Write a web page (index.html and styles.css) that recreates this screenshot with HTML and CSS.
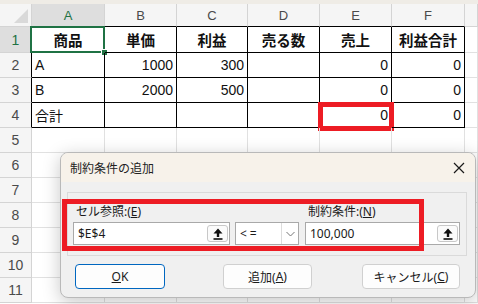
FILE: index.html
```html
<!DOCTYPE html>
<html lang="ja">
<head>
<meta charset="utf-8">
<title>制約条件の追加</title>
<link rel="stylesheet" href="styles.css">
</head>
<body>
<div class="band"></div>
<div class="sheet">
  <div class="c h corner"><span class="tri"></span></div>
  <div class="c h col tb selh">A</div>
  <div class="c h col tb">B</div>
  <div class="c h col tb">C</div>
  <div class="c h col tb">D</div>
  <div class="c h col tb">E</div>
  <div class="c h col tb">F</div>
  <div class="c h col"></div>

  <div class="c h rh tr selh">1</div>
  <div class="c t ctr b sel">商品<span class="selbox"><span class="handle"></span></span></div>
  <div class="c t ctr b">単価</div>
  <div class="c t ctr b">利益</div>
  <div class="c t ctr b">売る数</div>
  <div class="c t ctr b">売上</div>
  <div class="c t ctr b">利益合計</div>
  <div class="c"></div>

  <div class="c h rh tr">2</div>
  <div class="c t">A</div>
  <div class="c t num">1000</div>
  <div class="c t num">300</div>
  <div class="c t"></div>
  <div class="c t num">0</div>
  <div class="c t num">0</div>
  <div class="c"></div>

  <div class="c h rh tr">3</div>
  <div class="c t">B</div>
  <div class="c t num">2000</div>
  <div class="c t num">500</div>
  <div class="c t"></div>
  <div class="c t num">0</div>
  <div class="c t num">0</div>
  <div class="c"></div>

  <div class="c h rh tr">4</div>
  <div class="c t">合計</div>
  <div class="c t"></div>
  <div class="c t"></div>
  <div class="c t"></div>
  <div class="c t num mark">0<span class="markbox"></span></div>
  <div class="c t num">0</div>
  <div class="c"></div>

  <div class="c h rh">5</div><div class="c"></div><div class="c"></div><div class="c"></div><div class="c"></div><div class="c"></div><div class="c"></div><div class="c"></div>
  <div class="c h rh">6</div><div class="c"></div><div class="c"></div><div class="c"></div><div class="c"></div><div class="c"></div><div class="c"></div><div class="c"></div>
  <div class="c h rh">7</div><div class="c"></div><div class="c"></div><div class="c"></div><div class="c"></div><div class="c"></div><div class="c"></div><div class="c"></div>
  <div class="c h rh">8</div><div class="c"></div><div class="c"></div><div class="c"></div><div class="c"></div><div class="c"></div><div class="c"></div><div class="c"></div>
  <div class="c h rh">9</div><div class="c"></div><div class="c"></div><div class="c"></div><div class="c"></div><div class="c"></div><div class="c"></div><div class="c"></div>
  <div class="c h rh">10</div><div class="c"></div><div class="c"></div><div class="c"></div><div class="c"></div><div class="c"></div><div class="c"></div><div class="c"></div>
  <div class="c h rh">11</div><div class="c"></div><div class="c"></div><div class="c"></div><div class="c"></div><div class="c"></div><div class="c"></div><div class="c"></div>
</div>

<div class="dlg">
  <div class="dlg-title">
    <span class="title-text">制約条件の追加</span>
    <svg class="close" width="12" height="12" viewBox="0 0 12 12"><path d="M1 1 L11 11 M11 1 L1 11" stroke="#1a1a1a" stroke-width="1.2" fill="none"/></svg>
  </div>
  <div class="dlg-body">
    <div class="group">
      <div class="field f1">
        <div class="lbl">セル参照:(<u>E</u>)</div>
        <div class="input">
          <span class="val">$E$4</span>
          <span class="ref"><svg width="10" height="12" viewBox="0 0 10 12"><path d="M5 0.5 L9.5 5.5 L6.2 5.5 L6.2 9 L3.8 9 L3.8 5.5 L0.5 5.5 Z" fill="#111"/><rect x="0.5" y="10.2" width="9" height="1.6" fill="#111"/></svg></span>
        </div>
      </div>
      <div class="field f2">
        <div class="combo">
          <span class="val op">&lt;=</span>
          <span class="drop"><svg width="9" height="6" viewBox="0 0 9 6"><path d="M0.5 1 L4.5 5 L8.5 1" stroke="#777" stroke-width="1" fill="none"/></svg></span>
        </div>
      </div>
      <div class="field f3">
        <div class="lbl">制約条件:(<u>N</u>)</div>
        <div class="input">
          <span class="val">100,000</span>
          <span class="ref"><svg width="10" height="12" viewBox="0 0 10 12"><path d="M5 0.5 L9.5 5.5 L6.2 5.5 L6.2 9 L3.8 9 L3.8 5.5 L0.5 5.5 Z" fill="#111"/><rect x="0.5" y="10.2" width="9" height="1.6" fill="#111"/></svg></span>
        </div>
      </div>
    </div>
    <div class="buttons">
      <div class="btn ok"><u>O</u>K</div>
      <div class="btn add">追加(<u>A</u>)</div>
      <div class="btn cancel">キャンセル(<u>C</u>)</div>
    </div>
  </div>
  <div class="redbox"></div>
</div>
</body>
</html>
```
FILE: styles.css
```css
* { box-sizing: border-box; }
html, body { margin: 0; padding: 0; }
body {
  position: relative;
  width: 478px;
  height: 304px;
  overflow: hidden;
  background: #ffffff;
  font-family: "Liberation Sans", "Noto Sans CJK JP", sans-serif;
}
.band { height: 4px; background: #efece6; }
.sheet {
  display: grid;
  grid-template-columns: 32px 73px 72px 71px 72px 72px 73px 1fr;
  grid-template-rows: 23px 26px repeat(10, 25px);
}
.c {
  position: relative;
  display: flex;
  align-items: center;
  padding: 0 3px;
  border-right: 1px solid #e1e1e1;
  border-bottom: 1px solid #e1e1e1;
  font-size: 14px;
  color: #111;
  white-space: nowrap;
}
.h {
  background: #f5f5f5;
  border-color: #d4d4d4;
  color: #4a4a4a;
  justify-content: center;
}
.col { font-size: 13px; }
.rh { font-size: 14px; padding: 0; }
.selh { background: #dedede; color: #1f7244; }
.corner { position: relative; }
.tri {
  position: absolute;
  right: 3px;
  bottom: 3px;
  width: 14px;
  height: 14px;
  background: #d9d9d9;
  clip-path: polygon(100% 0, 100% 100%, 0 100%);
}
.tb { border-bottom-color: #000; }
.tr { border-right-color: #000; }
.t { border-right-color: #000; border-bottom-color: #000; }
.ctr { justify-content: center; }
.b { font-weight: 700; font-size: 14.5px; }
.num { justify-content: flex-end; }
.selbox {
  position: absolute;
  left: -2px;
  top: -1px;
  right: -1px;
  bottom: -1px;
  border: 2px solid #1f7244;
}
.handle {
  position: absolute;
  right: -5px;
  bottom: -5px;
  width: 7px;
  height: 7px;
  background: #1f7244;
  border: 1px solid #fff;
}
.markbox {
  position: absolute;
  left: -2px;
  top: -1px;
  right: -3px;
  bottom: -4px;
  border: 5px solid #ed1c24;
}

/* dialog */
.dlg {
  position: absolute;
  left: 60px;
  top: 152px;
  width: 416px;
  height: 146px;
  border: 1px solid #b9b9b9;
  border-radius: 8px;
  background: #f0f0f0;
  box-shadow: 0 4px 18px rgba(0,0,0,0.22);
  overflow: hidden;
  font-family: "Noto Sans", "Noto Sans CJK JP", sans-serif;
  color: #1a1a1a;
}
.dlg-title {
  height: 29px;
  background: #f7f2ea;
  display: flex;
  align-items: center;
  justify-content: space-between;
  padding: 0 10px 0 9px;
  font-size: 12px;
}
.title-text { color: #222; }
.close { display: block; margin-right: 0; }
.dlg-body { padding: 10px 0 0 6px; }
.group {
  width: 400px;
  height: 64px;
  border: 1px solid #dadada;
  display: flex;
  align-items: flex-end;
  padding: 0 0 10px 5px;
}
.field { display: flex; flex-direction: column; }
.lbl { font-size: 12px; line-height: 16px; padding-left: 3px; margin-bottom: 2px; }
.f1 .input { width: 157px; }
.f2 { margin-left: 5px; }
.f3 { margin-left: 6px; }
.f3 .input { width: 155px; }
.input, .combo {
  height: 23px;
  background: #fff;
  border: 1px solid #a9a9a9;
  display: flex;
  align-items: center;
  font-size: 12px;
}
.input { padding: 0 1px 0 4px; justify-content: space-between; }
.ref {
  width: 21px;
  height: 17px;
  border: 1px solid #c8c8c8;
  border-radius: 3px;
  background: #fbfbfb;
  display: flex;
  align-items: center;
  justify-content: center;
}
.ref svg { display: block; }
.combo { width: 64px; padding-left: 4px; justify-content: space-between; }
.op { letter-spacing: 3px; }
.drop {
  width: 17px;
  height: 21px;
  border-left: 1px solid #dcdcdc;
  display: flex;
  align-items: center;
  justify-content: center;
}
.drop svg { display: block; }
.buttons {
  display: flex;
  margin-top: 8px;
  padding-left: 8px;
}
.btn {
  height: 25px;
  border: 1px solid #d0d0d0;
  border-radius: 4px;
  background: #fdfdfd;
  display: flex;
  align-items: center;
  justify-content: center;
  font-size: 12px;
  color: #1a1a1a;
}
.ok { width: 90px; border-color: #0067c0; }
.add { width: 89px; margin-left: 58px; }
.cancel { width: 98px; margin-left: 50px; }
.redbox {
  position: absolute;
  left: 1px;
  top: 46px;
  width: 362px;
  height: 52px;
  border: 5px solid #ed1c24;
}
```
